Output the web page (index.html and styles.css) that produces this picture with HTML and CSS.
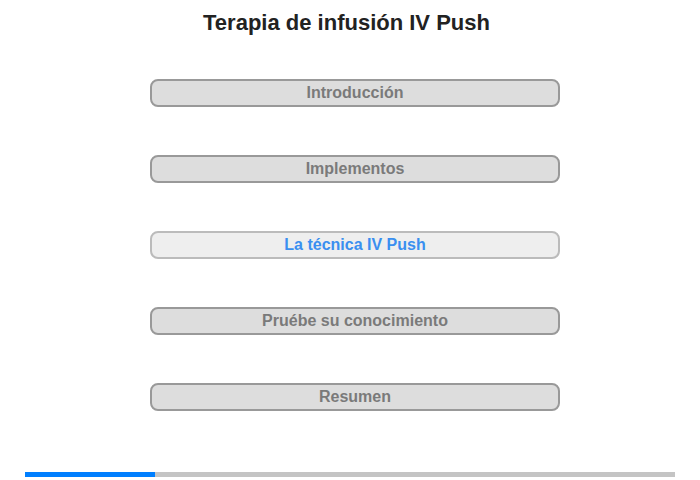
FILE: index.html
```html
<!DOCTYPE html>
<html lang="es">
<head>
<meta charset="utf-8">
<title>Terapia de infusión IV Push</title>
<link rel="stylesheet" href="styles.css">
</head>
<body>
<div class="page">
  <h1 class="title">Terapia de infusión IV Push</h1>
  <nav class="menu">
    <div class="item">Introducción</div>
    <div class="item">Implementos</div>
    <div class="item active">La técnica IV Push</div>
    <div class="item">Pruébe su conocimiento</div>
    <div class="item">Resumen</div>
  </nav>
  <div class="progress"><div class="progress-fill"></div></div>
</div>
</body>
</html>
```
FILE: styles.css
```css
html, body {
  margin: 0;
  padding: 0;
  background: #fff;
}
.page {
  width: 700px;
  height: 480px;
  font-family: "Liberation Sans", Arial, sans-serif;
  display: flex;
  flex-direction: column;
  align-items: center;
}
.title {
  margin: 10px 7px 0 0;
  font-size: 22px;
  line-height: 26px;
  font-weight: bold;
  color: #222;
}
.menu {
  margin-top: 43px;
  margin-left: 10px;
  display: flex;
  flex-direction: column;
  gap: 48px;
}
.item {
  box-sizing: border-box;
  width: 410px;
  height: 28px;
  border: 2px solid #999;
  border-radius: 8px;
  background: #ddd;
  color: #7a7a7a;
  font-weight: bold;
  font-size: 16px;
  line-height: 24px;
  text-align: center;
}
.item.active {
  background: #eee;
  border-color: #bbb;
  color: #3a8ff0;
}
.progress {
  margin-top: 61px;
  width: 650px;
  height: 5px;
  background: #c4c4c4;
}
.progress-fill {
  width: 130px;
  height: 100%;
  background: #007fff;
}
```
